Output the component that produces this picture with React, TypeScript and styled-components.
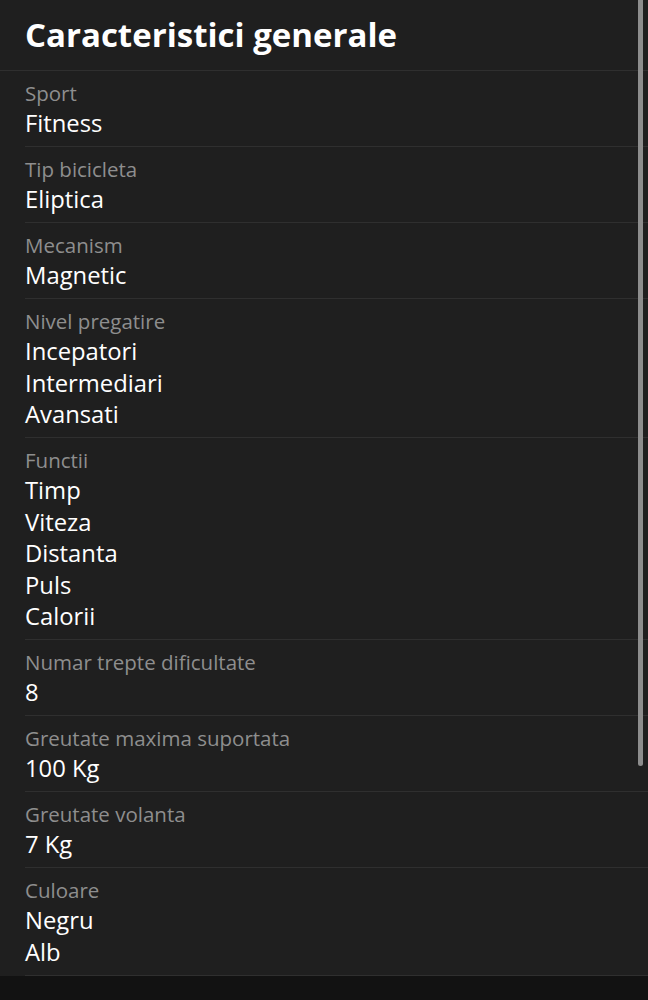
import React from "react";
import styled, { createGlobalStyle } from "styled-components";

const Global = createGlobalStyle`
  html, body { margin: 0; padding: 0; background: #121212; }
  body { font-family: "Open Sans", "Noto Sans", sans-serif; -webkit-font-smoothing: antialiased; }
`;

const Screen = styled.div`
  position: relative;
  width: 648px;
  height: 1000px;
  overflow: hidden;
  background: #121212;
`;

const Panel = styled.div`
  background: #1f1f1f;
  display: flex;
  flex-direction: column;
`;

const Header = styled.h1`
  margin: 0;
  height: 71px;
  box-sizing: border-box;
  padding: 12px 25px 0;
  font-size: 33px;
  line-height: 45px;
  font-weight: 700;
  color: #ffffff;
  border-bottom: 1px solid #2f2f2f;
`;

const List = styled.div`
  display: flex;
  flex-direction: column;
  padding-left: 25px;
`;

const Row = styled.div`
  display: flex;
  flex-direction: column;
  padding: 10px 0 6.5px;
  border-bottom: 1px solid #2f2f2f;
`;

const Label = styled.div`
  font-size: 20.5px;
  line-height: 25px;
  color: #8e8e8e;
  margin-bottom: 2px;
`;

const Value = styled.div`
  font-size: 23.8px;
  line-height: 31.5px;
  color: #ffffff;
`;

const Scrollbar = styled.div`
  position: absolute;
  top: 0;
  right: 5px;
  width: 5px;
  height: 766px;
  background: #8d8d8d;
  border-radius: 0 0 3px 3px;
`;

const data: { label: string; values: string[] }[] = [
  { label: "Sport", values: ["Fitness"] },
  { label: "Tip bicicleta", values: ["Eliptica"] },
  { label: "Mecanism", values: ["Magnetic"] },
  { label: "Nivel pregatire", values: ["Incepatori", "Intermediari", "Avansati"] },
  { label: "Functii", values: ["Timp", "Viteza", "Distanta", "Puls", "Calorii"] },
  { label: "Numar trepte dificultate", values: ["8"] },
  { label: "Greutate maxima suportata", values: ["100 Kg"] },
  { label: "Greutate volanta", values: ["7 Kg"] },
  { label: "Culoare", values: ["Negru", "Alb"] },
];

export default function App() {
  return (
    <Screen>
      <Global />
      <Panel>
        <Header>Caracteristici generale</Header>
        <List>
          {data.map((d) => (
            <Row key={d.label}>
              <Label>{d.label}</Label>
              {d.values.map((v) => (
                <Value key={v}>{v}</Value>
              ))}
            </Row>
          ))}
        </List>
      </Panel>
      <Scrollbar />
    </Screen>
  );
}
